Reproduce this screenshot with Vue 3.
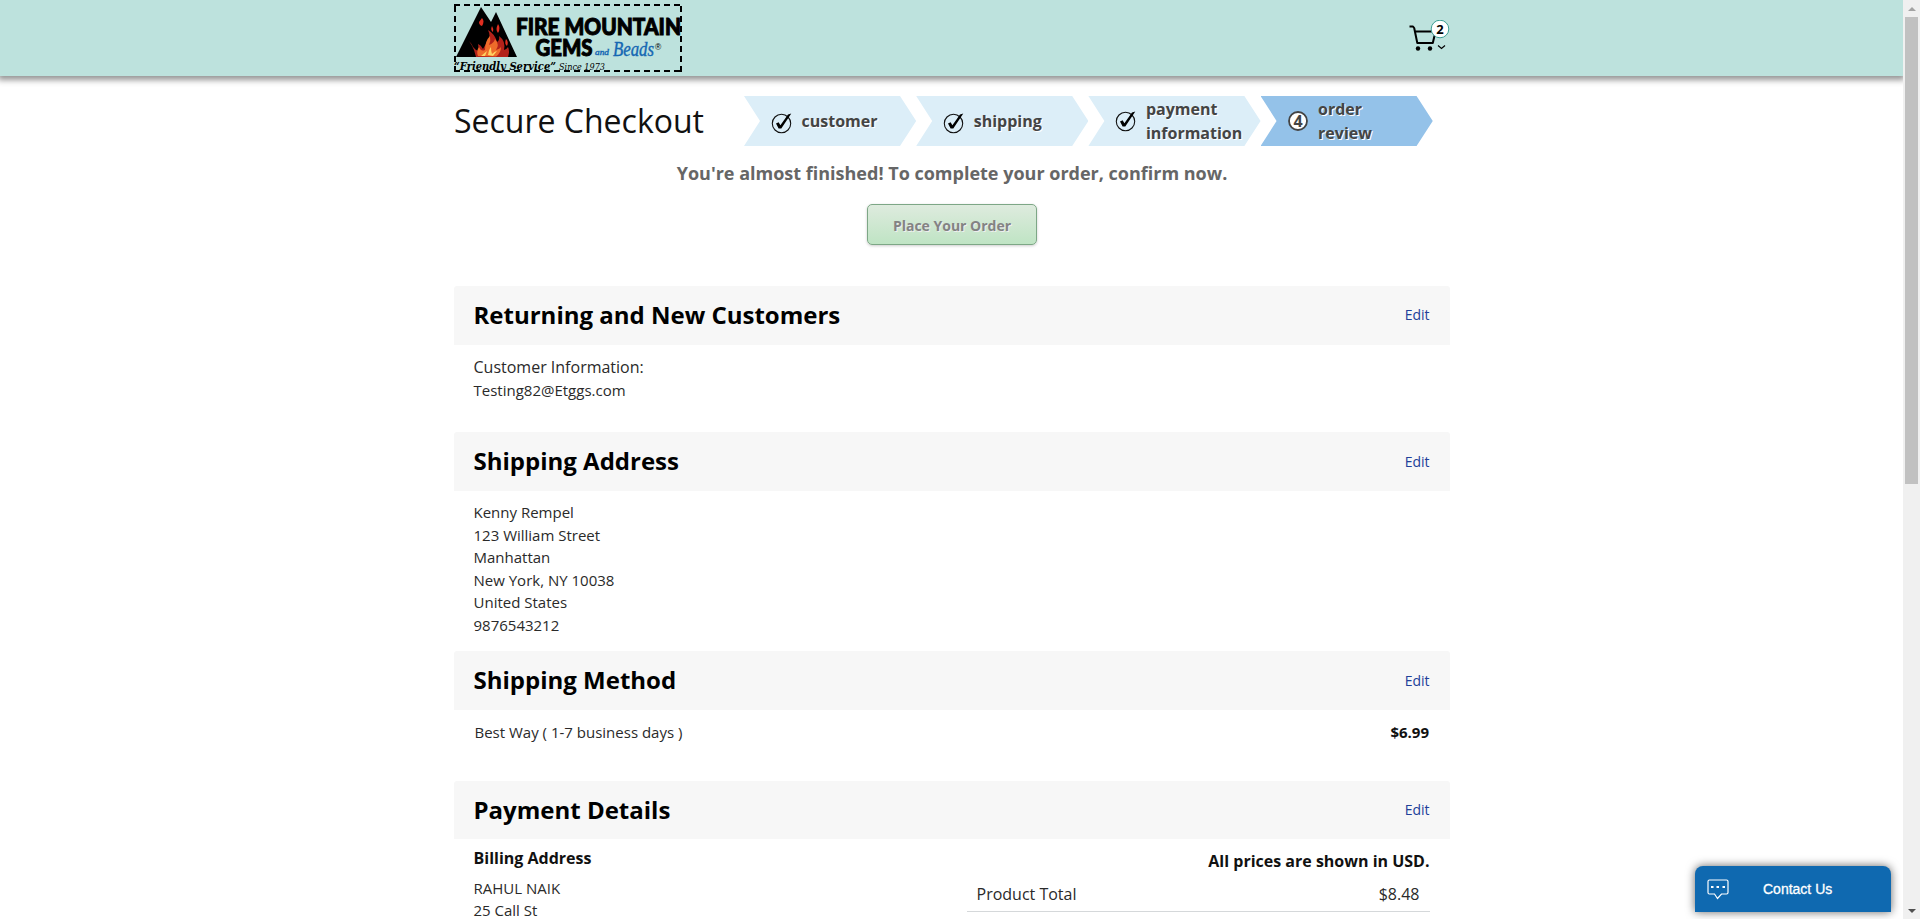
<script setup>
const steps = [
  { label: ['customer'], done: true },
  { label: ['shipping'], done: true },
  { label: ['payment', 'information'], done: true },
  { label: ['order', 'review'], done: false, number: 4 },
]
const address = ['Kenny Rempel', '123 William Street', 'Manhattan', 'New York, NY 10038', 'United States', '9876543212']
</script>

<template>
  <div class="window">
    <div class="page">
      <header class="top">
        <div class="top-inner">
          <a class="logo">
            <svg width="228" height="69" viewBox="0 0 228 69">
              <path d="M2 53 L27 3 L37 18 L42 8 L63 53 Z" fill="#000" />
              <path d="M15 37 q3 4 5 9 l2 7 h32 q2-6 0-10 q-2 3-4 3 q2-9-5-14 q1 4-2 6 q-2-8-9-12 q3 6 0 11 q-3 4-5 8 q-2-4-5-5 l1 7 q-4-1-6-4 q-1-3-4-6z" fill="#b3221a" />
              <path d="M24 52 q-2-5 1-9 q2 5 6 3 q0-9 5-14 q1 5-1 9 q5-2 6-6 q5 6 1 11 q4-1 5-3 q0 6-5 9.500 z" fill="#ee6b2a" />
              <path d="M27 52 l6-5 l-2 5 z M34 51 q1-6 3-8 q0 5 1 7 q3-3 5-3 l-4 5 z" fill="#ffd262" />
              <path d="M28 14 q3 3 0 8 q-3-1-3-4z M44 20 q3 4 0 9 q-3-3 0-9z M52 35 q3 3 1 7 q-3-2-1-7z M38 22 q2 3 1 6 q-3-2-1-6z" fill="#e02e20" />
              <g class="heavy">
                <text x="62" y="30.800" font-size="23" textLength="165" lengthAdjust="spacingAndGlyphs">FIRE MOUNTAIN</text>
                <text x="81.500" y="51.500" font-size="23.500" textLength="57" lengthAdjust="spacingAndGlyphs">GEMS</text>
              </g>
              <text class="script" x="141" y="51" font-size="9" textLength="14" lengthAdjust="spacingAndGlyphs">and</text>
              <text class="script" x="159" y="51.500" font-size="20" textLength="41" lengthAdjust="spacingAndGlyphs">Beads</text>
              <text x="201" y="46" font-size="8.500" class="sans">®</text>
              <text class="serif bold" x="0" y="65.500" font-size="10.500" textLength="102" lengthAdjust="spacingAndGlyphs">“Friendly Service”</text>
              <text class="serif" x="105" y="66" font-size="9" textLength="46" lengthAdjust="spacingAndGlyphs">Since 1973</text>
              <path d="M1 2 V68 M227 2 V68" class="dash" />
              <path d="M0 1 H228 M0 67 H228" class="dash" />
            </svg>
          </a>
          <a class="cart">
            <svg width="42" height="34" viewBox="0 0 42 34" fill="none" stroke="#000">
              <path d="M0.500 6.500 h3.500 l1.200 1.500 L8.300 23 h15.500 L26.500 11.500 H6" stroke-width="2" stroke-linejoin="round" />
              <circle cx="9" cy="28.500" r="2.200" fill="#000" stroke="none" />
              <circle cx="21" cy="28.500" r="2.200" fill="#000" stroke="none" />
              <circle cx="31" cy="9" r="8.800" fill="#fff" stroke="#3d9f94" />
              <path d="M29 25.500 l3.500 3 l3.500-3" stroke-width="1.200" />
              <text x="27.200" y="13.600" class="count">2</text>
            </svg>
          </a>
        </div>
      </header>

      <main class="content">
        <div class="heading">
          <h1>Secure Checkout</h1>
          <ol class="steps">
            <li v-for="s in steps" :key="s.label[0]" :class="{ current: !s.done, double: s.label.length > 1 }">
              <svg class="mark" width="22" height="22" viewBox="0 0 22 22">
                <template v-if="s.done">
                  <circle cx="10.500" cy="11.500" r="9.200" fill="none" stroke="#111" stroke-width="1.100" />
                  <path d="M5 11.500 L7.600 10.200 L9.400 13.300 L17 2.500 L20.300 1.500 L10.300 16.500 H7.600 Z" fill="#000" />
                </template>
                <template v-else>
                  <circle cx="10" cy="11" r="9" fill="#fff" stroke="#444" stroke-width="1.800" />
                  <text x="5.500" y="16.800" class="num">{{ s.number }}</text>
                </template>
              </svg>
              <span class="label"><span v-for="l in s.label" :key="l">{{ l }}</span></span>
            </li>
          </ol>
        </div>
        <p class="almost">You're almost finished! To complete your order, confirm now.</p>
        <button class="place">Place Your Order</button>

        <section class="customer">
          <div class="bar"><h2>Returning and New Customers</h2><a>Edit</a></div>
          <div class="body"><div class="lead">Customer Information:</div><div>Testing82@Etggs.com</div></div>
        </section>
        <section class="address">
          <div class="bar"><h2>Shipping Address</h2><a>Edit</a></div>
          <div class="body"><div v-for="l in address" :key="l">{{ l }}</div></div>
        </section>
        <section class="method">
          <div class="bar"><h2>Shipping Method</h2><a>Edit</a></div>
          <div class="body split"><span>Best Way ( 1-7 business days )</span><b>$6.99</b></div>
        </section>
        <section class="payment">
          <div class="bar"><h2>Payment Details</h2><a>Edit</a></div>
          <div class="columns">
            <div class="billing">
              <h3>Billing Address</h3>
              <div>RAHUL NAIK</div>
              <div>25 Call St</div>
            </div>
            <div class="totals">
              <h3>All prices are shown in USD.</h3>
              <div class="total"><span>Product Total</span><span>$8.48</span></div>
            </div>
          </div>
        </section>
      </main>
    </div>

    <div class="scrollbar">
      <i class="arrow up"></i>
      <div class="thumb"></div>
      <i class="arrow down"></i>
    </div>

    <div class="contact">
      <svg width="22" height="21" viewBox="0 0 22 21" fill="none" stroke="#fff" stroke-width="1.200">
        <path d="M2.500 1 h17 q1.500 0 1.500 1.500 v11 q0 1.500-1.500 1.500 h-5 L10.500 19.500 L7.500 15 h-5 q-1.500 0-1.500-1.500 v-11 q0-1.500 1.500-1.500z" />
        <path d="M4 8 h2.500 M9.500 8 h2.500 M15.500 8 h2.500" stroke-width="1.800" />
      </svg>
      <span>Contact Us</span>
    </div>
  </div>
</template>

<style>
body { margin: 0; background: #fff; overflow: hidden; }
</style>

<style scoped>
* { box-sizing: border-box; }
.window { position: relative; display: flex; width: 1920px; height: 919px; overflow: hidden; font-family: "Open Sans", "Noto Sans", sans-serif; color: #2a2a2a; }
.page { width: 1903px; height: 919px; overflow: hidden; }
.top { height: 76px; background: #bde2dd; box-shadow: 0 2px 6px 2px rgba(0, 0, 0, 0.42); }
.top-inner { width: 996px; margin-left: 454px; display: flex; justify-content: space-between; padding: 4px 0 0; }
.logo, .logo svg, .cart svg { display: block; }
.heavy { font-family: Lato, sans-serif; font-weight: 900; stroke: #000; stroke-width: 1px; }
.script { font-family: "Liberation Serif", serif; font-style: italic; fill: #1467b3; stroke: #1467b3; stroke-width: 0.4px; }
.sans { font-family: "Liberation Sans", sans-serif; }
.serif { font-family: "DejaVu Serif", serif; font-style: italic; }
.bold { font-weight: 700; }
.dash { fill: none; stroke: #000; stroke-width: 2; stroke-dasharray: 6 4; }
.cart { padding: 16px 0 0; width: 41px; }
.count { font: 700 13px "Noto Sans", sans-serif; fill: #000; stroke: none; }
.content { width: 996px; margin-left: 454px; }
.heading { display: flex; padding-top: 20px; height: 70px; }
h1 { width: 290px; margin: 3px 0 0; font-size: 32px; line-height: 44px; font-weight: 400; color: #111; white-space: nowrap; }
.steps { display: flex; margin: 0; padding: 0; list-style: none; }
.steps li { width: 172.2px; height: 50px; display: flex; align-items: center; padding-left: 27px; background: #dceef8; clip-path: polygon(0 0, 156px 0, 100% 50%, 156px 100%, 0 100%, 16px 50%); }
.steps li.current { background: #94c2e9; }
.mark { flex: none; margin: 3px 8.5px 0 0; }
.double .mark { margin-top: -1px; }
.label { display: flex; flex-direction: column; font-size: 16px; line-height: 24px; font-weight: 700; color: #444; text-shadow: 1px 1px 0 #fff; }
.num { font: 700 16px "Open Sans", sans-serif; fill: #444; }
.almost { margin: 14px 0 0; height: 26px; line-height: 26px; font-size: 18px; font-weight: 700; color: #666; text-align: center; white-space: nowrap; }
.place { display: block; width: 170px; height: 41px; margin: 18px auto 41px; padding: 2px 0 0; border: 1px solid #7da786; border-radius: 5px; background: linear-gradient(#deebde, #bfe4c4); box-shadow: 0 1px 3px rgba(0, 0, 0, 0.2); font: 700 14px "Open Sans", sans-serif; color: #838383; text-shadow: 1px 1px 0 #eee; }
.bar { height: 59px; display: flex; align-items: center; justify-content: space-between; padding: 0 20.5px 0 19.5px; background: #f7f7f7; border-radius: 3px 3px 0 0; }
.bar a { font-size: 14px; color: #21409a; }
.customer .bar a, .payment .bar a { margin-top: -2px; }
h2 { margin: -2px 0 0; font-size: 24px; line-height: 36px; font-weight: 700; color: #000; }
.payment h2 { margin-top: 0; }
.body { padding: 10px 20px 0 19.5px; font-size: 15px; line-height: 22.5px; }
.lead { font-size: 16px; line-height: 24px; }
.customer { height: 146px; }
.address { height: 219px; }
.method { height: 130px; }
.payment .bar { height: 58px; }
.split { display: flex; justify-content: space-between; padding: 11px 21px 0 20.5px; }
.split b { font-weight: 700; color: #111; font-size: 15px; }
.columns { display: flex; justify-content: space-between; padding: 0 20.5px 0 19.5px; }
h3 { margin: 0; font-size: 16px; line-height: 24px; font-weight: 700; color: #111; }
.billing { padding-top: 7px; font-size: 15px; line-height: 22px; }
.billing h3 { margin-bottom: 7px; }
.totals { width: 463px; padding-top: 10px; }
.totals h3 { text-align: right; }
.total { display: flex; justify-content: space-between; margin-top: 9px; height: 30px; padding: 0 10px; border-bottom: 1px solid #d5d8da; font-size: 16px; line-height: 24px; }
.scrollbar { width: 17px; height: 919px; display: flex; flex-direction: column; align-items: center; background: #f0f0f0; }
.arrow { width: 0; height: 0; border: 4px solid transparent; }
.up { margin: 3px 0 0; border-bottom-color: #a3a3a3; height: 8px; }
.thumb { width: 13px; height: 467px; margin-top: 6px; background: #c1c1c1; }
.down { margin-top: auto; margin-bottom: 2px; border-top-color: #505050; height: 8px; }
.contact { position: absolute; left: 1695px; top: 866px; width: 196px; height: 46px; display: flex; align-items: center; padding-left: 12px; background: #0f69b0; border-radius: 8px 8px 0 0; box-shadow: 0 0 10px rgba(0, 0, 0, 0.6); }
.contact span { margin-left: 34px; font: 14px "Liberation Sans", sans-serif; color: #fff; -webkit-text-stroke: 0.3px #fff; }
</style>
